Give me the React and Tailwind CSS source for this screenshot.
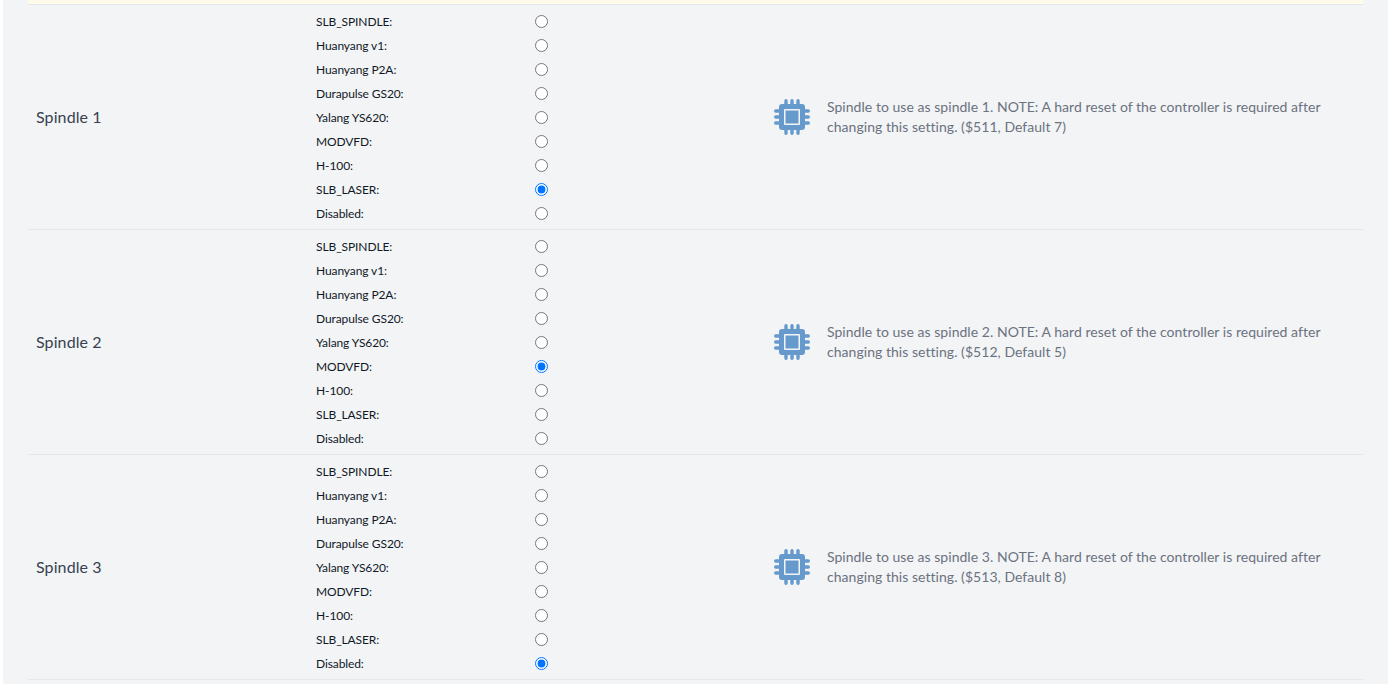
const OPTIONS = ["SLB_SPINDLE:", "Huanyang v1:", "Huanyang P2A:", "Durapulse GS20:", "Yalang YS620:", "MODVFD:", "H-100:", "SLB_LASER:", "Disabled:"];

const ROWS = [
  { name: "Spindle 1", selected: 7, text: "Spindle to use as spindle 1. NOTE: A hard reset of the controller is required after changing this setting. ($511, Default 7)" },
  { name: "Spindle 2", selected: 5, text: "Spindle to use as spindle 2. NOTE: A hard reset of the controller is required after changing this setting. ($512, Default 5)" },
  { name: "Spindle 3", selected: 8, text: "Spindle to use as spindle 3. NOTE: A hard reset of the controller is required after changing this setting. ($513, Default 8)" },
];

function Chip() {
  return (
    <svg viewBox="0 0 36 36" className="w-9 h-9 shrink-0 -ml-[1px]" fill="#6699cc" aria-hidden="true">
      <path fillRule="evenodd" d="M8 5h20a3 3 0 0 1 3 3v20a3 3 0 0 1-3 3H8a3 3 0 0 1-3-3V8a3 3 0 0 1 3-3zm3 5a1 1 0 0 0-1 1v14a1 1 0 0 0 1 1h14a1 1 0 0 0 1-1V11a1 1 0 0 0-1-1H11z" />
      <rect x="11.500" y="11.500" width="13" height="13" />
      <g stroke="#6699cc" strokeWidth="3.4" strokeLinecap="round" fill="none">
        <path d="M12 1.700v4M18 1.700v4M24 1.700v4M12 30v4.300M18 30v4.300M24 30v4.300M1.700 12h4M1.700 18h4M1.700 24h4M30 12h4.300M30 18h4.300M30 24h4.300" />
      </g>
    </svg>
  );
}

function Row({ row }) {
  return (
    <div className="flex h-[225px] border-b border-[#e5e7eb]">
      <div className="w-[280px] shrink-0 pl-2 flex items-center text-[16px] tracking-[0.1px] text-[#374151]">{row.name}</div>
      <div className="w-[459px] shrink-0 pl-2 pr-[219px] pt-1">
        {OPTIONS.map((o, i) => (
          <label key={o} className="flex h-6 items-center justify-between text-[12px] tracking-[-0.1px] text-[#111827]">
            <span className="pt-px">{o}</span>
            <input type="radio" name={row.name} defaultChecked={i === row.selected} className="w-[13px] h-[13px] m-0 accent-[#0075ff]" />
          </label>
        ))}
      </div>
      <div className="flex-1 flex items-center gap-[17px] pl-[8px] pr-10">
        <Chip />
        <p className="text-[14px] leading-5 tracking-[0.04px] text-[#6b7280]">{row.text}</p>
      </div>
    </div>
  );
}

export default function App() {
  return (
    <div className="h-[684px] overflow-hidden bg-white pl-[3px] pr-[8px]" style={{ fontFamily: 'Lato, "Open Sans", sans-serif' }}>
      <div className="h-full bg-[#f3f4f6] px-[25px]">
        <div className="h-[5px] bg-[#fefce8] border-b border-[#e5e7eb]" />
        {ROWS.map((r) => <Row key={r.name} row={r} />)}
      </div>
    </div>
  );
}
